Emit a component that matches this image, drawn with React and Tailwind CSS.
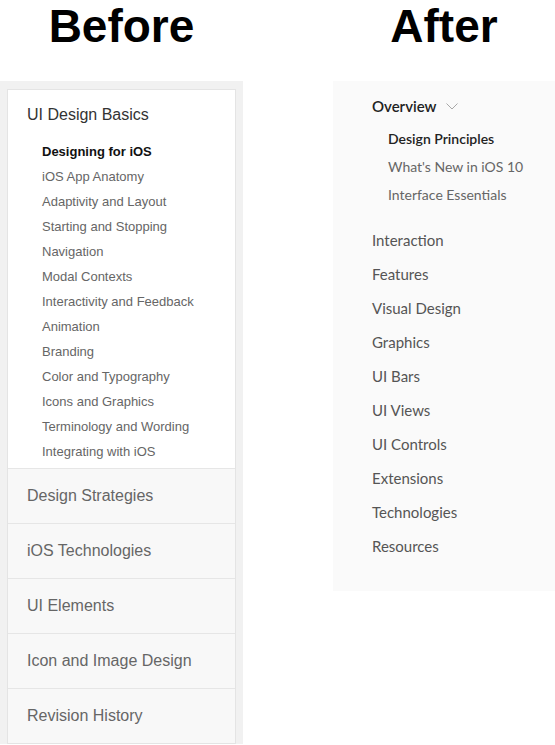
const basics = [
  "Designing for iOS",
  "iOS App Anatomy",
  "Adaptivity and Layout",
  "Starting and Stopping",
  "Navigation",
  "Modal Contexts",
  "Interactivity and Feedback",
  "Animation",
  "Branding",
  "Color and Typography",
  "Icons and Graphics",
  "Terminology and Wording",
  "Integrating with iOS",
];

const sections = ["Design Strategies", "iOS Technologies", "UI Elements", "Icon and Image Design", "Revision History"];

const overview = ["Design Principles", "What's New in iOS 10", "Interface Essentials"];

const topics = ["Interaction", "Features", "Visual Design", "Graphics", "UI Bars", "UI Views", "UI Controls", "Extensions", "Technologies", "Resources"];

const helvetica = { fontFamily: '"Liberation Sans", Arial, sans-serif' };

const BeforeNav = () => (
  <div className="w-[243px] bg-[#f1f1f1] px-[7px] pt-[8px]" style={helvetica}>
    <div className="border border-[#e4e4e4] bg-white">
      <div className="pt-[14px] pb-[4px]">
        <div className="pl-[19px] text-[16px] leading-[22px] text-[#333]">UI Design Basics</div>
        <ul className="mt-[13px]">
          {basics.map((item, i) => (
            <li
              key={item}
              className={`pl-[34px] text-[13px] leading-[25px] ${i === 0 ? "font-bold text-[#111]" : "text-[#666]"}`}
            >
              {item}
            </li>
          ))}
        </ul>
      </div>
      {sections.map((item) => (
        <div key={item} className="flex h-[55px] items-center border-t border-[#e6e6e6] bg-[#f8f8f8] pl-[19px] text-[16px] text-[#666]">
          {item}
        </div>
      ))}
    </div>
  </div>
);

const AfterNav = () => (
  <div className="ml-[90px] w-[222px] self-start bg-[#fafafa] pt-[13px] pb-[28px] pl-[39px]" style={{ fontFamily: "Lato, sans-serif" }}>
    <div className="flex items-center gap-[9px] text-[15px] leading-[24px] font-semibold text-[#222]">
      Overview
      <svg width="12" height="7" viewBox="0 0 12 7" className="mt-[1px]">
        <path d="M0.5 0.5 L6 6 L11.5 0.5" fill="none" stroke="#a8a8a8" strokeWidth="1" />
      </svg>
    </div>
    <ul className="mt-[7px]">
      {overview.map((item, i) => (
        <li key={item} className={`pl-[16px] text-[14px] leading-[28px] ${i === 0 ? "font-semibold text-[#222]" : "text-[#666]"}`}>
          {item}
        </li>
      ))}
    </ul>
    <ul className="mt-[14px]">
      {topics.map((item) => (
        <li key={item} className="text-[15px] leading-[34px] text-[#555]">
          {item}
        </li>
      ))}
    </ul>
  </div>
);

export default function App() {
  return (
    <div className="h-[745px] w-[555px] overflow-hidden bg-white">
      <div className="flex h-[81px] items-start text-[46px] font-bold leading-[53px] text-black" style={helvetica}>
        <span className="w-[243px] text-center">Before</span>
        <span className="ml-[90px] w-[222px] text-center">After</span>
      </div>
      <div className="flex">
        <BeforeNav />
        <AfterNav />
      </div>
    </div>
  );
}
